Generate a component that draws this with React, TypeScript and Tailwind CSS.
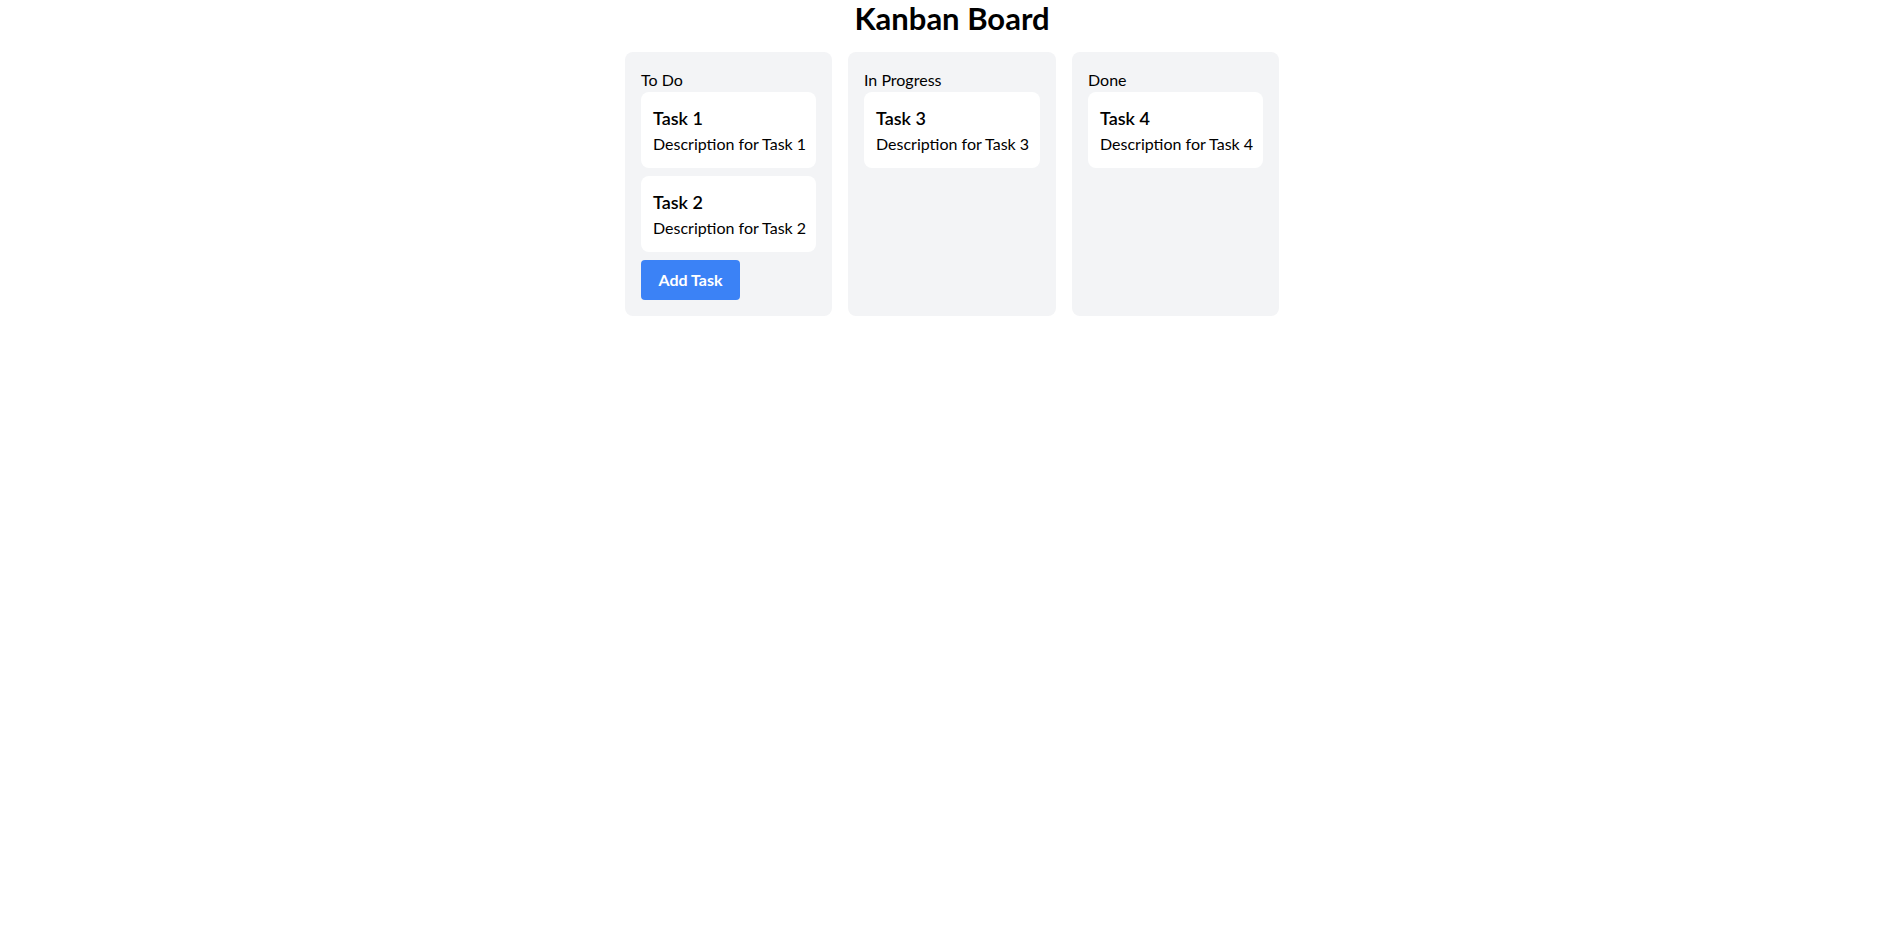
import React from "react";

type Task = { id: number; title: string; description: string };

const columns: { name: string; tasks: Task[]; add?: boolean; width: string }[] = [
  {
    name: "To Do",
    tasks: [
      { id: 1, title: "Task 1", description: "Description for Task 1" },
      { id: 2, title: "Task 2", description: "Description for Task 2" },
    ],
    add: true,
    width: "w-[207px]",
  },
  {
    name: "In Progress",
    tasks: [{ id: 3, title: "Task 3", description: "Description for Task 3" }],
    width: "w-[208px]",
  },
  {
    name: "Done",
    tasks: [{ id: 4, title: "Task 4", description: "Description for Task 4" }],
    width: "w-[207px]",
  },
];

export default function App() {
  return (
    <div className="min-h-screen bg-white text-black font-['Lato','Noto_Sans',sans-serif]">
      <h1 className="text-[31px] leading-9 font-bold text-center mb-4">Kanban Board</h1>
      <div className="flex justify-center gap-4">
        {columns.map((col) => (
          <div key={col.name} className={`${col.width} bg-[#f3f4f6] rounded-lg p-4 flex flex-col`}>
            <h2 className="text-base leading-6 font-normal">{col.name}</h2>
            <div className="flex flex-col gap-2">
              {col.tasks.map((t) => (
                <div key={t.id} className="bg-white rounded-lg p-3">
                  <h3 className="text-lg leading-7 font-semibold">{t.title}</h3>
                  <p className="text-base leading-6 whitespace-nowrap">{t.description}</p>
                </div>
              ))}
            </div>
            {col.add && (
              <div className="mt-2">
                <button className="bg-[#3b82f6] text-white font-bold px-4 py-2 min-w-[99px] rounded text-base leading-6">
                  Add Task
                </button>
              </div>
            )}
          </div>
        ))}
      </div>
    </div>
  );
}
